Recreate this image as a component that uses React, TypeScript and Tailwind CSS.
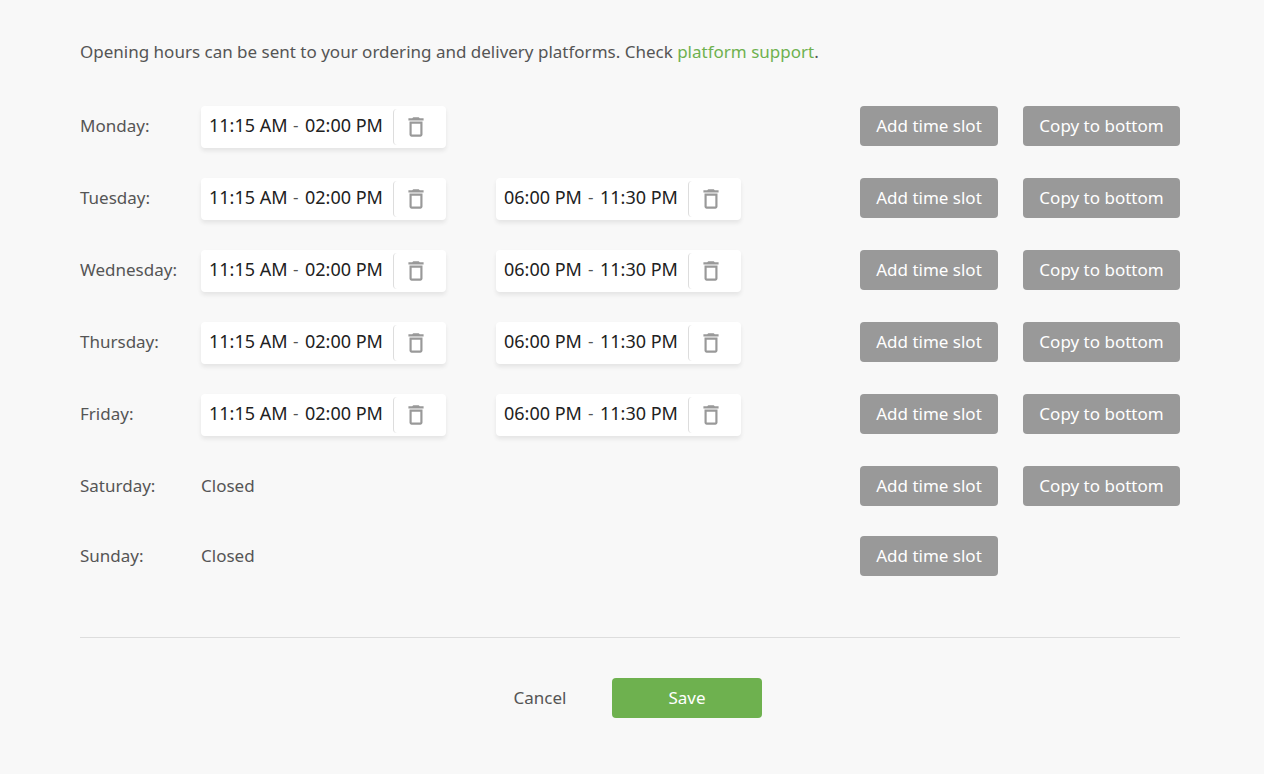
import React, { useState } from "react";

type Slot = { from: string; to: string };

type Day = { name: string; slots: Slot[] };

const lunch: Slot = { from: "11:15 AM", to: "02:00 PM" };
const dinner: Slot = { from: "06:00 PM", to: "11:30 PM" };

const initialDays: Day[] = [
  { name: "Monday", slots: [lunch] },
  { name: "Tuesday", slots: [lunch, dinner] },
  { name: "Wednesday", slots: [lunch, dinner] },
  { name: "Thursday", slots: [lunch, dinner] },
  { name: "Friday", slots: [lunch, dinner] },
  { name: "Saturday", slots: [] },
  { name: "Sunday", slots: [] },
];

const TrashIcon = () => (
  <svg width="26" height="26" viewBox="0 0 24 24" fill="#999999" aria-hidden="true">
    <path d="M6 19c0 1.100.9 2 2 2h8c1.100 0 2-.9 2-2V7H6v12zM8 9h8v10H8V9zm7.500-5-1-1h-5l-1 1H5v2h14V4z" />
  </svg>
);

const TimeInput = ({
  label,
  value,
  onChange,
}: {
  label: string;
  value: string;
  onChange: (value: string) => void;
}) => (
  <input
    type="text"
    aria-label={label}
    value={value}
    onChange={(e) => onChange(e.target.value)}
    className="h-10 w-20 bg-transparent text-lg text-[#212121] outline-none"
  />
);

const TimeSlot = ({
  day,
  slot,
  onChange,
  onRemove,
}: {
  day: string;
  slot: Slot;
  onChange: (slot: Slot) => void;
  onRemove: () => void;
}) => (
  <div className="flex h-[42px] w-[245px] items-center rounded bg-white pl-2 shadow-[0_3px_4px_rgba(0,0,0,0.08)]">
    <div className="flex items-center pb-1">
      <TimeInput
        label={`${day} opens at`}
        value={slot.from}
        onChange={(from) => onChange({ ...slot, from })}
      />
      <span className="w-4 pl-1">-</span>
      <TimeInput
        label={`${day} closes at`}
        value={slot.to}
        onChange={(to) => onChange({ ...slot, to })}
      />
    </div>
    <button
      type="button"
      aria-label={`Remove ${day} time slot`}
      onClick={onRemove}
      className="ml-2 flex h-9 flex-1 items-center rounded border-l border-[#dddddd] pl-[9px]"
    >
      <TrashIcon />
    </button>
  </div>
);

const App = () => {
  const [days, setDays] = useState(initialDays);

  const setSlots = (index: number, slots: Slot[]) => {
    setDays(days.map((day, i) => (i === index ? { ...day, slots } : day)));
  };

  const copyToBottom = (index: number) => {
    setDays(
      days.map((day, i) => (i > index ? { ...day, slots: days[index].slots } : day))
    );
  };

  return (
    <div className="min-h-screen bg-[#f8f8f8] py-10 pl-20 pr-[84px] font-['Noto_Sans',sans-serif] text-[17px] leading-6 text-[#555555]">
      <p>
        Opening hours can be sent to your ordering and delivery platforms. Check{" "}
        <a href="#platform-support" className="text-[#6eb14f]">
          platform support
        </a>
        .
      </p>

      <div className="mt-[42px] flex flex-col gap-[30px]">
        {days.map((day, index) => (
          <div key={day.name} className="flex items-start">
            <div className="w-[121px] leading-10">{day.name}:</div>
            <div className="flex flex-1 flex-wrap gap-x-[50px] gap-y-4">
              {day.slots.length === 0 && <div className="leading-10">Closed</div>}
              {day.slots.map((slot, i) => (
                <TimeSlot
                  key={i}
                  day={day.name}
                  slot={slot}
                  onChange={(next) =>
                    setSlots(index, day.slots.map((s, j) => (j === i ? next : s)))
                  }
                  onRemove={() => setSlots(index, day.slots.filter((_, j) => j !== i))}
                />
              ))}
            </div>
            <div className="grid grid-cols-[138px_157px] gap-[25px]">
              <button
                type="button"
                onClick={() => setSlots(index, [...day.slots, lunch])}
                className="h-10 rounded bg-[#999999] text-white"
              >
                Add time slot
              </button>
              {index < days.length - 1 && (
                <button
                  type="button"
                  onClick={() => copyToBottom(index)}
                  className="h-10 rounded bg-[#999999] text-white"
                >
                  Copy to bottom
                </button>
              )}
            </div>
          </div>
        ))}
      </div>

      <div className="mt-[61px] flex justify-center gap-[30px] border-t border-[#dddddd] pt-10">
        <button type="button" className="h-10 w-[84px]">
          Cancel
        </button>
        <button type="button" className="h-10 w-[150px] rounded bg-[#6eb14f] text-white">
          Save
        </button>
      </div>
    </div>
  );
};

export default App;
